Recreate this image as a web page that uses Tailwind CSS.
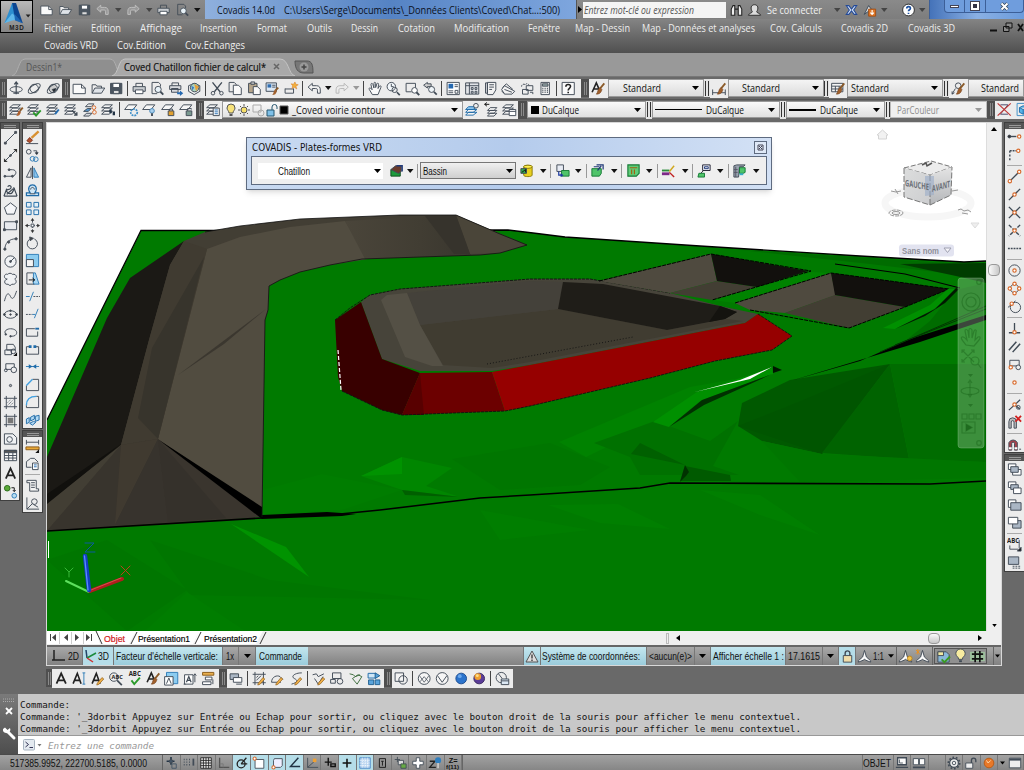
<!DOCTYPE html>
<html lang="fr">
<head>
<meta charset="utf-8">
<title>Covadis 14.0d</title>
<script src="https://cdn.jsdelivr.net/npm/@tailwindcss/browser@4"></script>
</head>
<body class="w-[1024px] h-[770px] overflow-hidden bg-[#696969] font-['Open_Sans','Noto_Sans',sans-serif] text-[10.5px] leading-none text-[#111] flex flex-col">

<!-- Title bar and menus -->
<header class="relative h-[53px] shrink-0 bg-linear-to-b from-[#858585] from-35% to-[#505050]">
  <div class="flex h-[19px] items-center bg-linear-to-b from-[#8a8a8a] to-[#7d7d7d] [&>*]:shrink-0">
    <div data-icons="new open saveg undog caretg redog caretg printw previeww" class="ml-[38px] flex h-full w-[153px] items-center justify-between"></div>
    <div data-icons="caret2" class="flex ml-[1px]"></div>
    <div class="ml-[3px] flex h-full w-[371px] items-center bg-linear-to-r from-[#8fb0dd] via-[#5583c4] to-[#7ea6de] text-[#0a1020]">
      <span data-w="58" class="ml-3">Covadis 14.0d</span>
      <span data-w="276" class="ml-[9px]">C:\Users\Serge\Documents\_Données Clients\Coved\Chat...:500)</span>
    </div>
    <div class="flex h-full w-[7px] items-center justify-center border-l border-[#555]"><svg class="h-[7px] w-[4px]" viewBox="0 0 4 7"><path d="M0 0l4 3.5L0 7z"/></svg></div>
    <div class="flex h-[16px] w-[143px] items-center bg-[#f4f4f4] text-[10px] italic text-[#555]"><span data-w="110" class="ml-[1px]">Entrez mot-clé ou expression</span></div>
    <div data-icons="bino user" class="flex ml-[2px] gap-[1px]"></div>
    <span data-w="55" class="ml-[4px] text-[#f2f2f2]">Se connecter</span>
    <div data-icons="caretg xchange a360 caretg" class="ml-[10px] flex items-center gap-[1px]"></div>
    <div data-icons="helpb caretg" class="ml-[11px] flex items-center"></div>
    <div class="ml-auto flex h-full w-[95px] items-start border-l border-[#3c5f98] bg-linear-to-r from-[#4573b9] via-[#8ab0e4] to-[#6b9bdc] pl-[14px]">
      <div class="flex h-[13px] w-[84px] rounded-b border border-t-0 border-[#3c5f98] bg-[#6f9ddd]">
        <div class="flex w-[20px] items-center justify-center border-r border-[#3c5f98]"><i class="block h-[3px] w-[9px] border border-[#445] bg-white"></i></div>
        <div class="flex w-[21px] items-center justify-center border-r border-[#3c5f98]"><i class="block size-[8px] border-2 border-white bg-[#334] outline outline-[#445]"></i></div>
        <div class="flex grow items-center justify-center"><svg class="size-[9px]" viewBox="0 0 9 9"><path d="M1.500 1.500l6 6M7.500 1.500l-6 6" stroke="#345" stroke-width="3.400"/><path d="M1.500 1.500l6 6M7.500 1.500l-6 6" stroke="#fff" stroke-width="2"/></svg></div>
      </div>
    </div>
  </div>
  <nav class="flex h-[17px] items-center pl-[44px] text-[#eeeeee] [&>*]:shrink-0">
    <span data-w="28">Fichier</span>
    <span data-w="30" class="ml-[19px]">Edition</span>
    <span data-w="42" class="ml-[19px]">Affichage</span>
    <span data-w="37" class="ml-[18px]">Insertion</span>
    <span data-w="30" class="ml-[20px]">Format</span>
    <span data-w="25" class="ml-[20px]">Outils</span>
    <span data-w="27" class="ml-[19px]">Dessin</span>
    <span data-w="37" class="ml-[20px]">Cotation</span>
    <span data-w="55" class="ml-[19px]">Modification</span>
    <span data-w="32" class="ml-[19px]">Fenêtre</span>
    <span data-w="55" class="ml-[15px]">Map - Dessin</span>
    <span data-w="113" class="ml-[12px]">Map - Données et analyses</span>
    <span data-w="52" class="ml-[15px]">Cov. Calculs</span>
    <span data-w="47" class="ml-[19px]">Covadis 2D</span>
    <span data-w="47" class="ml-[20px]">Covadis 3D</span>
    <svg class="ml-[33px] h-[11px] w-[36px]" viewBox="0 0 36 11" fill="none" stroke="#111"><path d="M2 8.500h7" stroke-width="2"/><path d="M18 1h6v5h-6zM15.500 4.500h5.500v5h-5.500z" fill="#888"/><path d="M30 2l5 7M35 2l-5 7" stroke-width="1.800"/></svg>
  </nav>
  <nav class="flex h-[17px] items-center pl-[44px] text-[#eeeeee]">
    <span data-w="54">Covadis VRD</span>
    <span data-w="49" class="ml-[19px]">Cov.Edition</span>
    <span data-w="60" class="ml-[19px]">Cov.Echanges</span>
  </nav>
  <div class="absolute left-0 top-0 flex h-[33px] w-[33px] flex-col items-center border border-black bg-linear-to-b from-[#b9b9b9] to-[#858585]">
    <svg class="h-[32px] w-[31px]" viewBox="0 0 31 32"><path d="M3 23L11 2h4l-2 14z" fill="#2d8fd0"/><path d="M11 2h4l7 21-8-4z" fill="#0c4590"/><path d="M3 23l8-10 4 3 3 3-7 1z" fill="#5fb8ea"/><path d="M13 13l9 10-8-3z" fill="#1c66b4"/><path d="M25 14h5l-2.500 3z" fill="#222"/><text x="8" y="30" font-size="6.500" font-weight="700" font-family="Liberation Sans" fill="#222" textLength="15">M3D</text></svg>
  </div>
</header>

<!-- Drawing tabs -->
<div class="flex h-[24px] shrink-0 items-end border-b border-[#777] bg-[#999999]">
  <svg class="h-[20px] w-[320px]" viewBox="0 0 320 20">
    <path d="M12 20c7-2 6-17 13-17h85c7 0 6 15 12 17z" fill="#8f8f8f" stroke="#aeaeae"/>
    <path d="M112 20c7-2 6-17 13-17h155c9 0 8 15 15 17z" fill="#a9a9a9" stroke="#c4c4c4"/>
    <path d="M295 5h12c5 0 6 4 6 12h-9c-6 0-9-4-9-12z" fill="#777" stroke="#555"/><circle cx="304" cy="11" r="4.500" fill="#999"/><path d="M301.500 11h5M304 8.500v5" stroke="#444" stroke-width="1.500"/>
    <path d="M274 8l5 5M279 8l-5 5" stroke="#666" stroke-width="1.500"/>
    <text x="26" y="14.500" font-size="11" fill="#555" textLength="36" lengthAdjust="spacingAndGlyphs">Dessin1*</text>
    <text x="124" y="14.500" font-size="11" fill="#111" stroke="#111" stroke-width=".2" textLength="142" lengthAdjust="spacingAndGlyphs">Coved Chatillon fichier de calcul*</text>
  </svg>
</div>

<!-- Toolbar row 1 -->
<div class="flex h-[22px] shrink-0 items-center text-[11px]">
  <div data-grip class="w-[7px] shrink-0"></div>
  <div data-icons="orbit orbit2 orbit3" class="flex h-[19px] shrink-0 items-center bg-[#ececec]"></div>
  <div data-grip class="w-[8px] shrink-0"></div>
  <div data-icons="new open save | print preview plot globe | cut copy paste match blockedit | undo caret redo caretg | hand zoomrt zoomwin zoomprev | props dcenter palette sheets markup calc | help" class="flex h-[19px] w-[511px] shrink-0 items-center bg-[#ececec]"></div>
  <div data-grip class="w-[8px] shrink-0"></div>
  <div data-icons="abrush" class="flex h-[19px] shrink-0 items-center bg-[#ececec]"></div>
  <div data-combo class="flex h-[18px] w-[96px] shrink-0 items-center border border-[#999] bg-linear-to-b from-[#f4f4f4] to-[#dcdcdc] pl-[14px] pr-1"><span data-w="38">Standard</span></div>
  <div data-bars class="w-[6px] shrink-0"></div>
  <div data-icons="dimbrush" class="flex h-[19px] shrink-0 items-center bg-[#ececec]"></div>
  <div data-combo class="flex h-[18px] w-[96px] shrink-0 items-center border border-[#999] bg-linear-to-b from-[#f4f4f4] to-[#dcdcdc] pl-[13px] pr-1"><span data-w="38">Standard</span></div>
  <div data-bars class="w-[5px] shrink-0"></div>
  <div data-icons="tablebrush" class="flex h-[19px] shrink-0 items-center bg-[#ececec]"></div>
  <div data-combo class="flex h-[18px] w-[96px] shrink-0 items-center border border-[#999] bg-linear-to-b from-[#f4f4f4] to-[#dcdcdc] pl-[3px] pr-1"><span data-w="38">Standard</span></div>
  <div data-bars class="w-[6px] shrink-0"></div>
  <div data-icons="leaderbrush" class="flex h-[19px] shrink-0 items-center bg-[#ececec]"></div>
  <div class="flex h-[18px] grow items-center border border-[#999] bg-linear-to-b from-[#f4f4f4] to-[#dcdcdc] pl-[12px]"><span data-w="38">Standard</span></div>
</div>

<!-- Toolbar row 2 -->
<div class="flex h-[20px] shrink-0 items-center border-t border-[#555] text-[11px]">
  <div data-grip class="w-[7px] shrink-0"></div>
  <div data-icons="laymatch layok laydown layup layiso laywalk | layfreeze layoff laylock layunlock" class="flex h-[18px] w-[189px] shrink-0 items-center bg-[#ececec]"></div>
  <div data-grip class="w-[8px] shrink-0"></div>
  <div data-icons="layprop" class="flex h-[18px] shrink-0 items-center bg-[#ececec]"></div>
  <div data-combo class="flex h-[17px] w-[241px] shrink-0 items-center border border-[#999] bg-linear-to-b from-[#fafafa] to-[#e2e2e2] pl-[1px] pr-1">
    <svg class="h-4 w-[67px] shrink-0" viewBox="0 0 67 16" fill="none" stroke="#555"><path d="M5 11c0-2-2-3-2-5a4 4 0 0 1 8 0c0 2-2 3-2 5z" fill="#f7e27a"/><path d="M5.500 13h3" stroke-width="2"/><circle cx="20" cy="8" r="3" fill="#f6df6a"/><path d="M20 2v2M20 12v2M14 8h2M24 8h2M16 4l1 1M23 11l1 1M24 4l-1 1M17 11l-1 1"/><path d="M29 3h8v7h-8z" stroke="#aaa"/><circle cx="37" cy="11" r="3" stroke="#aaa"/><path d="M43 8h7v6h-7z" fill="#7fc0e8" stroke="#27566f"/><path d="M48 8V5a2 2 0 0 1 5 0v2" stroke="#27566f"/><path d="M56 4h8v8h-8z" fill="#000"/></svg>
    <span data-w="93" class="ml-[1px]">_Coved voirie contour</span></div>
  <div data-icons="laycur layback laymgr" class="flex h-[18px] w-[55px] shrink-0 items-center bg-[#ececec]"></div>
  <div data-grip class="w-[9px] shrink-0"></div>
  <div data-combo class="flex h-[17px] w-[119px] shrink-0 items-center border border-[#999] bg-linear-to-b from-[#fafafa] to-[#e0e0e0] pl-[3px] pr-1"><i class="block size-[8px] bg-black"></i><span data-w="37" class="ml-[3px]">DuCalque</span></div>
  <div data-bars class="w-[6px] shrink-0"></div>
  <div data-combo class="flex h-[17px] w-[128px] shrink-0 items-center border border-[#999] bg-linear-to-b from-[#fafafa] to-[#e0e0e0] pl-[2px] pr-1"><i class="block h-px w-[47px] bg-black"></i><span data-w="38" class="ml-[4px]">DuCalque</span></div>
  <div data-bars class="w-[6px] shrink-0"></div>
  <div data-combo class="flex h-[17px] w-[99px] shrink-0 items-center border border-[#999] bg-linear-to-b from-[#fafafa] to-[#e0e0e0] pl-[2px] pr-1"><i class="block h-[2px] w-[27px] bg-black"></i><span data-w="38" class="ml-[4px]">DuCalque</span></div>
  <div data-bars class="w-[5px] shrink-0"></div>
  <div data-combo class="flex h-[17px] w-[97px] shrink-0 items-center border border-[#bbb] bg-[#f0f0f0] fill-[#999] pl-[6px] pr-1 text-[#8c8c8c]"><span data-w="42">ParCouleur</span></div>
  <div data-grip class="w-[8px] shrink-0"></div>
  <div data-icons="redx cube" class="flex h-[18px] grow items-center overflow-hidden bg-[#ececec]"></div>
</div>

<!-- Work area -->
<main class="flex h-[547px] shrink-0 pt-[3px]">
  <div class="flex h-[379px] w-[20px] shrink-0 flex-col border border-[#3f3f3f] bg-[#ececec]">
    <div class="flex h-[6px] flex-col items-center justify-center gap-px bg-[#555]"><i class="h-px w-[12px] bg-[#999]"></i><i class="h-px w-[12px] bg-[#999]"></i></div>
    <div data-icons="line xline pline mline3 polygon rect arc circle cloud spline ellipse earc insert block point hatch gradient region table textA addsel" class="flex grow flex-col items-center justify-between py-[1px]"></div>
  </div>
  <div class="ml-[2px] flex w-[21px] shrink-0 flex-col gap-[1px]">
    <div class="flex h-[307px] flex-col border border-[#3f3f3f] bg-[#ececec]">
      <div class="flex h-[6px] flex-col items-center justify-center gap-px bg-[#555]"><i class="h-px w-[12px] bg-[#999]"></i><i class="h-px w-[12px] bg-[#999]"></i></div>
      <div data-icons="erase copyobj mirror offset array move rotate scale stretch trim extend break1 break2 join chamfer fillet explode" class="flex grow flex-col items-center justify-between py-[1px]"></div>
    </div>
    <div class="flex h-[83px] flex-col border border-[#3f3f3f] bg-[#ececec]">
      <div class="flex h-[6px] flex-col items-center justify-center gap-px bg-[#555]"><i class="h-px w-[12px] bg-[#999]"></i><i class="h-px w-[12px] bg-[#999]"></i></div>
      <div data-icons="dist area - listp idpt" class="flex grow flex-col items-center justify-between py-[1px]"></div>
    </div>
  </div>

  <!-- Drawing window -->
  <section class="relative ml-[3px] flex h-[544px] w-[956px] shrink-0 flex-col border border-[#d8d8d8] bg-[#f0f0f0]">
    <div class="flex h-[508px]">
      <svg class="h-[508px] w-[939px] shrink-0 bg-white" viewBox="47 123 939 508">
        <defs>
          <linearGradient id="face" x1="0" y1="0" x2="1" y2="0"><stop offset="0" stop-color="#4a453a"/><stop offset=".6" stop-color="#413d33"/><stop offset="1" stop-color="#39362e"/></linearGradient>
          <linearGradient id="cl" x1="0" y1="0" x2="1" y2="1"><stop offset="0" stop-color="#dcdddd"/><stop offset="1" stop-color="#cccdcf"/></linearGradient>
          <linearGradient id="cr" x1="0" y1="0" x2="0" y2="1"><stop offset="0" stop-color="#e4e4e4"/><stop offset="1" stop-color="#b4b6b9"/></linearGradient>
        </defs>
        <!-- ground -->
        <path d="M47 420L141 231 508 230 533 233 565 237 700 246 860 256 964 262 986 261V631H47z" fill="#007a00"/>
        <path d="M47 420L141 230.500 508 230 533 233 565 237 700 246 860 256 964 262 986 261" fill="none" stroke="#000" stroke-width="1.300"/>
        <!-- ground facets -->
        <path d="M740 250l130 14 116 14v-15l-22 1-110-7z" fill="#006c00"/>
        <path d="M900 264l86-1v20l-30-7z" fill="#003c00"/>
        <path d="M955 290l31-7v33l-86 29 30-24z" fill="#006c00"/>
        <path d="M559 442l131-55 45-8-60 44-60 20-29 14z" fill="#008200"/>
        <path d="M594 443l61-22 55 20 28-20-25 45 26 9H640l-10-18z" fill="#007100"/>
        <path d="M631 454l9-11 45 22z" fill="#006000"/>
        <path d="M685 466l45 9 1 6h-51z" fill="#005a00"/>
        <path d="M680 482l5-17 4 7-3 4z" fill="#003200"/>
        <path d="M742 403l48-23 100-16-68 90-60-13-24-15z" fill="#005900"/>
        <path d="M786 407l104-43-68 90-84-28z" fill="#005200" opacity=".55"/>
        <path d="M890 364l19 95-87-6z" fill="#006300"/>
        <path d="M890 364h96v98l-77-3z" fill="#006c00"/>
        <path d="M762 441l60 13 164 8v16l-186 4z" fill="#007600"/>
        <path d="M452 459l98-16 60 24-30 18-80 5z" fill="#007600"/>
        <path d="M361 476l41-19 50 11-26 18 34 11-58-7z" fill="#008600"/><path d="M361 476l41-19v17z" fill="#009300"/>
        <path d="M402 490l58 7-55-2z" fill="#005f00"/>
        <path d="M262 490l60-16 80 16-60 20-80 5z" fill="#007d00"/>
        <path d="M530 497l80-8 60-6 316-2v150H47V531l215-16 140-9z" fill="#007a00"/>
        <path d="M548 505l70-1 52 25-70-6zM700 490l60 5 60 40-60-20z" fill="#007f00"/>
        <path d="M231 524l55 23 23 30z" fill="#009300"/>
        <path d="M150 540l120 40 160 20-240-5zM47 560l60-20 80 50-60 41z" fill="#007600"/>
        <path d="M187 592l-42 39h100z" fill="#007d00"/><path d="M480 510l20 30 90-10z" fill="#007e00"/>
        <!-- embankment -->
        <path d="M184 241l21-9 35-6 60-7 100-4h56l44 19 27 11-27 8-20 2-118 4-32 6-30 7-20 8-11 6-1 24-3 10-3 197L47 531V458z" fill="#423e34"/>
        <path d="M184 241l-54 37-23 40L47 457v46l74-58 28-105 21-75z" fill="#1b1915"/>
        <path d="M47 494l74-50-74 60z" fill="#11100d"/>
        <path d="M207 249l33-12 50-10 55-6 23 38-38 6-30 7-20 8-11 6-1 24-3 10-3 190-104-71z" fill="#514c40"/>
        <path d="M345 221l111-6 15 40-106 4z" fill="url(#face)"/>
        <path d="M456 215l45 19 26 11-27 8-30 1z" fill="#4a4539"/>
        <path d="M456 215l14 39h-16l-29-38z" fill="#36332c"/>
        <path d="M184 241l23 8-49 190-37 6 28-105 21-75z" fill="#403b31"/>
        <path d="M204 257l-46 182-20-21 14-70z" fill="#37342c"/>
        <path d="M178 375l88-66-42 35z" fill="#3b372f"/>
        <path d="M158 439l-37 6-74 86 215-14z" fill="#3a352e"/>
        <path d="M121 445l-5 80-69 6z" fill="#38342d"/><path d="M121 445l37-6-43 86z" fill="#403a30"/><path d="M158 439l10 83-53 3z" fill="#37332d"/><path d="M158 439l68 79-58 4z" fill="#35312b"/>
        <path d="M159 440l103 67v12z" fill="#000"/>
        <path d="M262 515l65-3 29 2-14 2-80 3z" fill="#000"/>
        <path d="M47 531l215-13M340 514l40-4 100-12 50-3 110-7 30-5 260 1 56-3" fill="none" stroke="#000" stroke-width="1.600"/>
        <path d="M262 517l3-197 3-10 1-24 11-6 20-8 30-7 32-6 118-4 20-2 27-8-27-11-44-19h-56l-100 4-60 7-35 6" fill="none" stroke="#111" stroke-width=".8"/>
        <!-- main basin -->
        <path d="M361 302l9-7 30-6 130-10h60l80 14 50 13 38 8-13 9-215 42-38 6h-72l-38-12z" fill="#47443a"/>
        <path d="M335 320l26-18 21 57 38 14-18 42-20-5-40-19-4-14z" fill="#380000"/>
        <path d="M420 373l72-1 13 39-103 4z" fill="#6c0000"/><path d="M420 373l4 42-22 0z" fill="#580000"/>
        <path d="M492 372l38-7 215-42 13-9 34 22-20 14-57 11-65 17-60 14-60 14-25 5z" fill="#960000"/>
        <path d="M420 325l138-16 109 21 60-11 16 2-213 41-38 6-49-3z" fill="#403c31"/>
        <path d="M407 293l123-12 33 1-5 27-138 16z" fill="#44413a"/>
        <path d="M381 300l6-5 20-2 13 32 23 41h-11l-27-9z" fill="#545045"/>
        <path d="M563 282l40 2 117 22 17 6-12 7-58 11-109-21z" fill="#1f1d18"/><path d="M720 306l17 6-12 7-16 3z" fill="#14130f"/>
        <path d="M487 364l146-27" stroke="#111" stroke-width=".9" stroke-dasharray="1 2"/>
        <path d="M335 320l15-12 20-13 30-6 130-10h60l80 14M342 391l40 19 20 5 103-4 25-5 120-28 65-17 57-11 20-14-34-22" fill="none" stroke="#111" stroke-width=".9" stroke-dasharray="3 1"/>
        <path d="M338 350l3 40" stroke="#fff" stroke-width="1.200" stroke-dasharray="4 2"/>
        <!-- side basins -->
        <path d="M599 281l112-27 6 27-47 12z" fill="#4f4a3f"/><path d="M717 281l40 6-45 13-42-7z" fill="#423e33"/><path d="M711 254l97 17-51 16-40-6z" fill="#12100d"/>
        <path d="M712 300l100-28 19 1-96 30z" fill="#008300"/>
        <path d="M735 303l96-30 5 22-51 18-35-3z" fill="#4f4a3f"/><path d="M835 295l70 12-56 21-64-15z" fill="#423e33"/><path d="M831 273l118 16-44 18-70-12z" fill="#12100d"/>
        <path d="M599 281l112-27 100 17-99 29M735 303l96-30 118 16M750 310l99 18 56-21 44-18" fill="none" stroke="#000" stroke-width="1" stroke-dasharray="4 1"/>
        <path d="M835 264l70 10 55 14" fill="none" stroke="#000" stroke-width="1.200"/>
        <path d="M948 289h8l-11 12-20 14-30 14-12-1 47-23z" fill="#009000"/><path d="M956 288l3 1-14 14-20 13-30 13 40-20z" fill="#001a00"/>
        <path d="M790 381l70-20 50-22 76-24v5l-66 22-60 18z" fill="#000"/><path d="M895 345l91-36M880 352l106-46" stroke="#003800" stroke-width="1"/>
        <!-- ditch -->
        <path d="M772 368l1 6-73 27-31 26-16-5 44-30z" fill="#009000"/><path d="M669 427l33-27 70-26-68 31z" fill="#003000"/>
        <path d="M695 392l45-12 32-13-22 12z" fill="#fff"/><path d="M773 366l9 4-9 3z" fill="#001500"/>
        <!-- UCS axes -->
        <g fill="none" stroke-linecap="round"><path d="M66 581l23 11" stroke="#5de05d" stroke-width="2"/><path d="M90 591l32-12" stroke="#b01d1d" stroke-width="4"/><path d="M91 590l30-12" stroke="#d65050"/><path d="M85 556l4 34" stroke="#123fc4" stroke-width="4.500"/><path d="M84.500 556l3.500 34" stroke="#5c8bff" stroke-width="1.300"/><path d="M121 566l9 9M130 566l-9 9" stroke="#b8441a"/><path d="M65 568l4 4 4-4M69 572v5" stroke="#38b838"/><path d="M85 543h9l-9 9h10" stroke="#0a5aa0"/></g>
        <!-- view cube -->
        <ellipse cx="928" cy="203" rx="43" ry="14" fill="none" stroke="#f6f6f6" stroke-width="7"/>
        <path d="M904 168l27-7 21 6-22 8z" fill="#ececec" stroke="#777" stroke-dasharray="5 2"/><path d="M904 168l26 7v30l-26-8z" fill="url(#cl)"/><path d="M930 175l22-8-1 28-21 10z" fill="url(#cr)"/>
        <path d="M904 168v29l26 8 21-10 1-28M930 175v30" fill="none" stroke="#777" stroke-dasharray="6 2"/><path d="M925 176l9 0v19l-9 1z" fill="#9aabc8" opacity=".6"/>
        <path d="M922 165l4-2 1 3 5-3" stroke="#555" stroke-width="1.500" fill="none"/>
        <text transform="translate(905 186) skewY(10)" font-size="9" font-weight="700" fill="#6a6f76" textLength="24" lengthAdjust="spacingAndGlyphs">GAUCHE</text>
        <text transform="translate(932 192) skewY(-16)" font-size="9" font-weight="700" fill="#6a6f76" textLength="18" lengthAdjust="spacingAndGlyphs">AVANT</text>
        <g fill="none" stroke="#999"><ellipse cx="896" cy="213" rx="7" ry="3" stroke-dasharray="4 1"/><ellipse cx="896" cy="213" rx="4" ry="1.500"/><path d="M891 191l5 1 5-1M895 189l3 5M952 191l6-1M958 210l3-1 3 2 4-1 3 2M962 213l6 1"/></g>
        <path d="M877 135l5.500-5 5.500 5h-1.500v4h-8v-4z" fill="#f2f2f2" stroke="#d4d4d4"/><path d="M971 223h8l-4 5z" fill="#eee" stroke="#ddd"/>
        <rect x="899" y="244.500" width="55" height="12" rx="3" fill="#e2e3f0"/><text x="902" y="254" font-size="8.500" font-weight="700" font-family="Liberation Sans" fill="#8f9099" textLength="37" lengthAdjust="spacingAndGlyphs">Sans nom</text><path d="M944 248h7l-3.500 4.500z" fill="#f5f5fa" stroke="#9fa0b0"/>
        <!-- navigation bar -->
        <rect x="958" y="278" width="26" height="170" rx="3" fill="#b5d8b5" fill-opacity=".33" stroke="#9c9" stroke-opacity=".35"/>
        <g fill="none" stroke="#1f6b1f" stroke-opacity=".55" stroke-width="1.200"><circle cx="971" cy="302" r="9"/><circle cx="971" cy="302" r="5"/><circle cx="979" cy="282" r="2.300"/><path d="M966 345c-3-4-6-7-4-8s4 2 5 3l-2-9c0-2 2-2 3 0l1 7v-8c0-2 2-2 3 0v8l2-7c1-2 3-1 2 1l-1 8 3-3c2-1 3 1 1 3l-5 6zM962 350l12 12M974 350l-12 12M962 353v-3h3M971 350h3v3M962 359v3h3"/><circle cx="975" cy="361" r="4"/><path d="M978 364l3 4M970 380v16M968 383l2-3 2 3M968 394l2 3 2-3"/><ellipse cx="970" cy="391" rx="9" ry="3.500"/><path d="M962 414h5v5h-5zM969 414h5v5h-5zM976 414h5v5h-5zM962 422h13v11h-13z"/><path d="M966 424l6 3.500-6 3.500z" fill="#1f6b1f"/><circle cx="979" cy="443" r="2.300"/></g>
        <path d="M968 374h5l-2.500 3zM968 404h5l-2.500 3z" fill="#1f6b1f" fill-opacity=".7"/>
        <path d="M48 541h1v17h-1z" fill="#fff"/>
      </svg>
      <div class="flex grow flex-col items-center justify-between border-l border-[#ddd] bg-[#efefef] py-[4px]">
        <svg class="h-[4px] w-[6px]" viewBox="0 0 6 4"><path d="M0 4l3-4 3 4z"/></svg>
        <div class="mb-[216px] h-[12px] w-[12px] rounded-sm border border-[#999] bg-linear-to-r from-[#fafafa] to-[#c8c8c8]"></div>
        <svg class="h-[3px] w-[5px]" viewBox="0 0 6 4"><path d="M0 0l3 4 3-4z"/></svg>
      </div>
    </div>
    <div class="flex h-[14px] items-center bg-[#efefef] font-['Liberation_Sans',sans-serif] text-[9.5px]">
      <svg class="h-[14px] w-[220px]" viewBox="0 0 220 14"><path d="M0 0h49l4 13H0z" fill="#fff"/><path d="M49 0l5 13h28l7-13z" fill="#fff"/><path d="M89 0l-5 13h62l6-13zM152 0l-5 13h62l7-13z" fill="#fff"/><path d="M49 0l6 13M90 1l-6 12M154 1l-6 12M219 1l-6 12" stroke="#333" fill="none"/><path d="M12.500 1v12M24.500 1v12M36.500 1v12" stroke="#ccc"/><path d="M9 3v7L5 6.500zM21 3v7l-4-3.500zM28 3v7l4-3.500zM39 3v7l4-3.500z" fill="#444"/><path d="M3.500 3v7M44.500 3v7" stroke="#444"/>
      <text x="57" y="10.500" fill="#cf1b1b" stroke="#cf1b1b" stroke-width=".2" textLength="21" lengthAdjust="spacingAndGlyphs">Objet</text><text x="91" y="10.500" stroke="#111" stroke-width=".2" textLength="52" lengthAdjust="spacingAndGlyphs">Présentation1</text><text x="157" y="10.500" stroke="#111" stroke-width=".2" textLength="53" lengthAdjust="spacingAndGlyphs">Présentation2</text></svg>
      <div class="ml-[399px] h-[11px] w-[3px] border border-[#bbb]"></div>
      <svg class="ml-[7px] h-[6px] w-[4px]" viewBox="0 0 4 6"><path d="M4 0L0 3l4 3z"/></svg>
      <div class="ml-[248px] h-[11px] w-[12px] rounded-sm border border-[#999] bg-linear-to-b from-[#fafafa] to-[#c8c8c8]"></div>
      <svg class="ml-[38px] h-[6px] w-[4px]" viewBox="0 0 4 6"><path d="M0 0l4 3-4 3z"/></svg>
    </div>
    <div class="flex h-[20px] items-stretch border-t-2 border-[#666] bg-linear-to-b from-[#a8a8a8] to-[#828282] pl-[4px] font-['Liberation_Sans',sans-serif] text-[10.5px] [&>*]:flex [&>*]:shrink-0 [&>*]:items-center">
      <div class="w-[32px] border-r border-[#777] pl-[1px]"><svg class="size-[14px]" viewBox="0 0 14 14"><path d="M2 1v10h11M0 11h2" fill="none" stroke="#222" stroke-width="1.500"/></svg><span data-w="11" class="ml-[2px]">2D</span></div>
      <div class="w-[31px] border-r border-[#777] bg-[#b5dde8] pl-[1px]"><svg class="size-[14px]" viewBox="0 0 14 14" fill="none" stroke-width="1.500"><path d="M2 1l1 8" stroke="#246"/><path d="M3 9l9-5" stroke="#1a8a3a"/><path d="M3 9l6 4" stroke="#c33"/></svg><span data-w="11">3D</span></div>
      <div class="w-[109px] border-r border-[#777] bg-linear-to-b from-[#c4e7ef] to-[#9accdb] pl-[2px]"><span data-w="102">Facteur d'échelle verticale:</span></div>
      <div class="w-[16px] border-r border-[#777] pl-[3px]"><span data-w="8">1x</span></div>
      <div class="w-[17px] justify-center border-r border-[#777]"><svg class="h-[4px] w-[7px]" viewBox="0 0 7 4"><path d="M0 0h7L3.500 4z"/></svg></div>
      <div class="w-[52px] bg-linear-to-b from-[#c4e7ef] to-[#9accdb] pl-[3px]"><span data-w="43">Commande</span></div>
      <div class="ml-[215px] w-[18px] justify-center border-x border-[#777] bg-linear-to-b from-[#c4e7ef] to-[#9accdb]"><svg class="h-[13px] w-[14px]" viewBox="0 0 14 13"><path d="M7 1l6 11H1z" fill="#ddd" stroke="#555"/><path d="M7 4.500v4M7 9.500v1.500" stroke="#333" stroke-width="1.300"/></svg></div>
      <div class="w-[106px] border-r border-[#777] bg-linear-to-b from-[#c4e7ef] to-[#9accdb] pl-[1px]"><span data-w="98">Système de coordonnées:</span></div>
      <div class="w-[48px] border-r border-[#777] pl-[2px]"><span data-w="43">&lt;aucun(e)&gt;</span></div>
      <div class="w-[16px] justify-center border-r border-[#777]"><svg class="h-[4px] w-[7px]" viewBox="0 0 7 4"><path d="M0 0h7L3.500 4z"/></svg></div>
      <div class="w-[75px] border-r border-[#777] bg-linear-to-b from-[#c4e7ef] to-[#9accdb] pl-[2px]"><span data-w="71">Afficher échelle 1 :</span></div>
      <div class="w-[37px] border-r border-[#777] pl-[2px]"><span data-w="32">17.1615</span></div>
      <div class="w-[16px] justify-center border-r border-[#777]"><svg class="h-[4px] w-[7px]" viewBox="0 0 7 4"><path d="M0 0h7L3.500 4z"/></svg></div>
      <div data-icons="lock" class="w-[17px] justify-center border-r border-[#777] bg-[#b5dde8]"></div>
      <div data-icons="anno" class="w-[17px] justify-center"></div>
      <div class="w-[24px] gap-[4px] border-r border-[#666]"><span data-w="11">1:1</span><svg class="h-[4px] w-[6px]" viewBox="0 0 7 4"><path d="M0 0h7L3.500 4z"/></svg></div>
      <div data-icons="anno2 anno3" class="w-[36px] border-r border-[#666]"></div>
      <div data-icons="sheetok bulb gridg" class="mx-[1px] my-[1px] w-[53px] justify-between border border-[#555] bg-[#909090]"></div>
      <div class="ml-[5px] w-[8px] justify-center border-l border-[#666]"><svg class="h-[4px] w-[5px]" viewBox="0 0 7 4"><path d="M0 0h7L3.500 4z"/></svg></div>
    </div>

    <!-- Floating palette -->
    <div class="absolute left-[199px] top-[14px] flex h-[53px] w-[526px] flex-col border border-[#5e6b80] bg-linear-to-r from-[#c9daf1] via-[#b4cbec] to-[#d3e1f5] px-[4px] pb-[4px] shadow-md">
      <div class="flex h-[18px] items-center justify-between font-['DejaVu_Sans_Condensed','DejaVu_Sans',sans-serif] text-[10px]"><span data-w="130" class="ml-[1px]">COVADIS - Plates-formes VRD</span><div class="flex size-[13px] items-center justify-center border border-[#5e6b80] bg-[#dfe9f7]"><svg class="size-[7px]" viewBox="0 0 7 7"><path d="M1 1h5v5H1zM2 2l3 3M5 2L2 5" fill="none" stroke="#445"/></svg></div></div>
      <div class="flex grow items-center border border-[#5e6b80] bg-[#efefef] pl-[6px] font-['Liberation_Sans',sans-serif] text-[10px] [&>*]:shrink-0">
        <div data-combo class="flex h-[16px] w-[125px] items-center bg-white pl-[20px] pr-[2px]"><span data-w="32">Chatillon</span></div>
        <div data-icons="pf1 caret" class="ml-[5px] flex items-center"></div>
        <div class="ml-[2px] h-[14px] w-px bg-[#999]"></div>
        <div data-combo class="ml-[2px] flex h-[17px] w-[96px] items-center border border-[#777] bg-linear-to-b from-[#f0f0f0] to-[#cfcfcf] pl-[2px] pr-[2px]"><span data-w="24">Bassin</span></div>
        <div data-icons="pf2 caret ; pf3 caret ; pf4 caret ; pf5 caret ; pf6 caret ; pf7 caret ; pf8 caret" class="ml-[2px] flex w-[243px] items-center justify-between"></div>
      </div>
    </div>
  </section>

  <div class="ml-[2px] flex grow flex-col gap-[1px] overflow-hidden">
    <div class="flex h-[331px] w-[22px] flex-col border border-[#3f3f3f] bg-[#ececec]">
      <div class="flex h-[6px] shrink-0 flex-col items-center justify-center gap-px bg-[#555]"><i class="h-px w-[12px] bg-[#999]"></i><i class="h-px w-[12px] bg-[#999]"></i></div>
      <div data-icons="track from - send smid sint sapp sext - scen squa stan - sper spar sins snod - snea snone - ssett" class="flex grow flex-col items-center justify-between pr-[2px]"></div>
    </div>
    <div class="flex h-[118px] w-[22px] flex-col border border-[#3f3f3f] bg-[#ececec]">
      <div class="flex h-[6px] shrink-0 flex-col items-center justify-center gap-px bg-[#555]"><i class="h-px w-[12px] bg-[#999]"></i><i class="h-px w-[12px] bg-[#999]"></i></div>
      <div data-icons="ord1 ord2 ord3 ord4 - abc ordh" class="flex grow flex-col items-center justify-between py-[1px] pr-[2px]"></div>
    </div>
  </div>
</main>

<!-- Bottom toolbar -->
<div class="flex h-[28px] shrink-0 pl-[46px] pt-[3px]">
  <div data-grip class="h-[19px] w-[6px]"></div>
  <div data-icons="textA textI textE find spell abrush tscale tjust tspace" class="flex h-[19px] w-[167px] items-center bg-[#ececec]"></div>
  <div data-grip class="h-[19px] w-[8px]"></div>
  <div data-icons="order | hatche plinee splinee | arre refe refs attsync" class="flex h-[19px] w-[157px] items-center bg-[#ececec]"></div>
  <div data-grip class="h-[19px] w-[8px]"></div>
  <div data-icons="vs2d | vswire vshide vsreal vsconc | vsmgr" class="flex h-[19px] w-[121px] items-center bg-[#ececec]"></div>
</div>

<!-- Command line -->
<div class="flex h-[60px] shrink-0">
  <div class="flex w-[18px] flex-col items-center bg-linear-to-b from-[#7a7a7a] to-[#4e4e4e] pt-[4px]">
    <svg class="h-[50px] w-[16px]" viewBox="0 0 16 50" fill="none"><path d="M2 1h12M2 3.500h12" stroke="#aaa" stroke-dasharray="1 1"/><path d="M5 10l6 6M11 10l-6 6" stroke="#fff" stroke-width="1.800"/><path d="M7 34l6 6" stroke="#fff" stroke-width="3" stroke-linecap="round"/><path d="M4 29.500l2.500 2.500L9 30a3.500 3.500 0 0 1-4 5 3.500 3.500 0 0 1-3-4z" fill="#fff"/></svg>
  </div>
  <div class="flex grow flex-col">
    <div class="flex h-[42px] flex-col border-b border-[#999] bg-[#c8c8c8] pl-[2px] pt-[4px] font-['DejaVu_Sans_Mono',monospace] text-[9.3px] text-[#141414]">
      <p class="flex h-[12px] items-center"><span data-w="50">Commande:</span></p>
      <p class="flex h-[12px] items-center"><span data-w="781">Commande: '_3dorbit Appuyez sur Entrée ou Echap pour sortir, ou cliquez avec le bouton droit de la souris pour afficher le menu contextuel.</span></p>
      <p class="flex h-[12px] items-center"><span data-w="781">Commande: '_3dorbit Appuyez sur Entrée ou Echap pour sortir, ou cliquez avec le bouton droit de la souris pour afficher le menu contextuel.</span></p>
    </div>
    <div class="flex grow items-center bg-white pl-[5px] font-['DejaVu_Sans_Mono',monospace] text-[9.3px] italic text-[#999]">
      <svg class="h-[12px] w-[20px]" viewBox="0 0 20 12"><rect x=".5" y=".5" width="11" height="10.500" rx="1" fill="#e4eaf0" stroke="#a8b4c0"/><path d="M2.500 3l3 2.500-3 2.500M6.500 8.500h3.500" fill="none" stroke="#335"/><path d="M14.500 5h4L16.500 7.500z" fill="#777"/></svg>
      <span data-w="106" class="ml-[5px]">Entrez une commande</span>
    </div>
  </div>
</div>

<!-- Status bar -->
<footer class="flex h-[16px] shrink-0 items-stretch border-t border-[#4a4a4a] bg-linear-to-b from-[#a2a2a2] to-[#868686] font-['Liberation_Sans',sans-serif] text-[10px] [&>*]:flex [&>*]:shrink-0 [&>*]:items-center">
  <div class="w-[162px] pl-[10px]"><span data-w="137">517385.9952, 222700.5185, 0.0000</span></div>
  <div data-status="infer snap grid ortho polar* osnap* osnap3d* otrack* ducs dyn lwt* tpy* qp sc plus3d zpin zfx" class="w-[301px] border-x border-[#666]"></div>
  <div class="ml-[399px] w-[32px] border-x border-[#777]"><span data-w="28">OBJET</span></div>
  <div data-status="lmodel lquick blank gear unlock orange" class="w-[104px]"></div>
  <div class="w-[9px] justify-center"><svg class="h-[4px] w-[5px]" viewBox="0 0 7 4"><path d="M0 0h7L3.500 4z"/></svg></div>
  <div data-status="clean" class="w-[17px]"></div>
</footer>

<script>
const pencil = '<path d="M7 13l5-6 2 1.500-5 5.500-2.500 1z" fill="#f0b048" stroke="#8a5a18" stroke-width=".7"/>';
const brush = '<path d="M14.500 2.500L10 8" stroke="#8a5a28" stroke-width="2"/><path d="M10 7l2 2c-1 4-3 5-6 5 2-2 1-5 4-7z" fill="#a0602c" stroke="#70401c" stroke-width=".6"/>';
const layers = '<path d="M4.500 10h8l-3.500 3H1z" fill="#f6f6f6"/><path d="M4.500 6.500h8L9 9.500H1z" fill="#f6f6f6"/><path d="M4.500 3h8L9 6H1z" fill="#f6f6f6"/>';
const layer1 = '<path d="M5 3h9l-4 5H1z" fill="#f6f6f6"/>';
const O = '#d8692a';
const ring = (x, y, r = 1.8) => `<circle cx="${x}" cy="${y}" r="${r}" stroke="${O}" fill="#fff" stroke-width="1.200"/>`;
const icons = {
  'new': '<path d="M1.500 3.500h9l4 4v6h-13z" fill="#fafafa"/><path d="M10.500 3.500v4h4"/>',
  open: '<path d="M1.500 13V4h4l1 1.500h5V8" fill="#eee"/><path d="M1.500 13l3-5.500H15L11.500 13z" fill="#dfe3e8"/>',
  save: '<path d="M2 2.500h12v11H2z" fill="#4b5560"/><path d="M4.500 2.500h7V7h-7z" fill="#fff"/><path d="M5 10h6v3.500H5z" fill="#ddd"/>',
  print: '<path d="M4.500 6V2.500h7V6"/><path d="M1.500 6h13v5h-13z" fill="#c8ccd0"/><path d="M4 9.500h8v4H4z" fill="#fff"/>',
  preview: '<path d="M2.500 1.500h7l2 2V6M8 13.500H2.500v-12" fill="none"/><circle cx="9" cy="9" r="3.300" fill="#e8f2f8"/><path d="M11.500 11.500l3 3" stroke-width="2"/>',
  plot: '<path d="M3.500 5V2h7v3"/><path d="M1 5h12v4H1zM3 8h7v4H3z" fill="#d8dade"/><path d="M9 12h3v-2l3.500 3-3.500 3v-2H9z" fill="#2468b0" stroke="none"/>',
  globe: '<path d="M2 5l6-2.500L14 5v6l-6 3.500L2 11z" fill="#eee"/><circle cx="8.500" cy="7" r="4.500" fill="#a8d4c0"/><path d="M8 3l5 3-3 5z" fill="#e8a038" stroke="none"/><path d="M5 5l3 2-2 3z" fill="#3a78c8" stroke="none"/>',
  cut: '<path d="M3 1.500l8 10M13 1.500L5 11.500" stroke-width="1.400"/><circle cx="3.500" cy="13" r="1.900"/><circle cx="12.500" cy="13" r="1.900"/>',
  copy: '<path d="M1.500 1.500H7l2 2v8H1.500z"/><path d="M6 4.500h5.500l3 3v7H6z" fill="#fafafa"/>',
  paste: '<path d="M2 2.500h9v10H2z" fill="#b5a58a"/><path d="M4.500 1h4v2.500h-4z" fill="#ccc"/><path d="M7 6h4.500l3 3v5.500H7z" fill="#fafafa"/>',
  match: '<path d="M1.500 2h11v9h-11z" fill="#dce8f4"/><path d="M3 3.500h4V7H3z" fill="#2f6db0" stroke="none"/><path d="M8 4.500h3.500M8 6.500h3.500"/><path d="M14.500 7l-3 3" stroke="#8a5a28" stroke-width="2"/><path d="M11 9l2 2c-1 3-2 4-5 4 2-2 1-4 3-6z" fill="#a0602c" stroke="none"/>',
  blockedit: '<path d="M1.500 8.500h9M1.500 8v5h9V8"/><path d="M12 1l1 2.500L15.500 4 13 5.500l1 3-3-2L9 8l.5-3L8 3l2.500.5z" fill="#f4b13c" stroke="#d8832a" stroke-width=".6"/>',
  undo: '<path d="M1.500 6.500L6 2.500V5h4.500c3 0 4 2 4 4.500V13h-3v-3c0-1.500-.5-2-2-2H6v2.500z" fill="#f2f2f2"/>',
  redo: '<path d="M14.500 6.500L10 2.500V5H5.500c-3 0-4 2-4 4.500V13h3v-3c0-1.500.5-2 2-2H10v2.500z" stroke="#b8b8b8"/>',
  hand: '<path d="M5 14.500L2 9.500c-1.500-2 .5-3 2-1l.7.8L3.500 4c-.3-1.700 1.500-2 2-.5L6.700 7.500V2.500c0-1.500 1.800-1.500 1.800 0v4.500L9.800 3c.6-1.300 2-.7 1.800.6L11 8l1.500-2.500c1-1 2.300 0 1.500 1.500l-3 7.500z" fill="#fafafa"/>',
  zoomrt: '<circle cx="6" cy="6" r="4.500" fill="#f4f8fb"/><path d="M6 3v3h2.500"/><circle cx="9.500" cy="9.500" r="2.800"/><path d="M12 12l3 3" stroke-width="1.800"/>',
  zoomwin: '<path d="M1.500 2.500h10v7"/><path d="M1.500 2.500v9h6"/><circle cx="10.500" cy="10" r="3" fill="#fff"/><path d="M12.500 12l3 3" stroke-width="2"/>',
  zoomprev: '<path d="M5 1.500L1 4.500l4 3V6h4V3H5z" fill="#ccc"/><circle cx="9.500" cy="9" r="3.200" fill="#eef4f8"/><path d="M12 11.500l3 3" stroke-width="1.800"/>',
  props: '<path d="M1.500 1.500h13v13h-13z" fill="#fff"/><path d="M3 3h5v5H3z" fill="#2468b0" stroke="none"/><path d="M9.500 4H13M9.500 6H13M3 10.500h5M3 12.500h5M10 10h3v3h-3z"/>',
  dcenter: '<path d="M1 2h14v12H1z" fill="#e2e4e8"/><path d="M5 2v12M1 5h14M7 7h2v2H7zM11 7h2v2h-2zM7 11h2v2H7zM11 11h2v2h-2z"/>',
  palette: '<path d="M5 1.500h9v8l-3 5H5z" fill="#f2f2f2"/><path d="M3 2h2v11H3zM7 4h5M7 6.500h5M7 9h3"/>',
  sheets: '<path d="M1 9l3-4 11 6-3 3H4z" fill="#f2f2f2"/><path d="M2 7l4-4 7 6M1 11l3 2M4 9l8 3"/>',
  markup: '<path d="M2 6c0-3 3-3 4-2 1-2 4-1 4 1" stroke-dasharray="2 1"/><path d="M7 5h7v5H7zM3 9h6v5H3z" fill="#eee"/><path d="M11 12h3v2"/>',
  calc: '<path d="M3.500 1.500h9v13h-9z" fill="#f4f4f4"/><path d="M5 3h6v2.500H5z" fill="#9aa"/><path d="M5 8h6M5 10h6M5 12h6" stroke-dasharray="1 1.400" stroke-width="1.500"/>',
  help: '<path d="M1.500 1.500h13v13h-13z" fill="#fafafa"/><path d="M5.500 6c0-3 5-3 5-.3C10.500 8 8 7.500 8 10M8 11.500v1.500" stroke-width="1.700" stroke="#222"/>',
  orbit: '<path d="M8 1v13M6 3.500L8 1l2 2.500M5 13h6" stroke-width="1.300"/><ellipse cx="8" cy="9" rx="6.500" ry="3"/>',
  orbit2: '<circle cx="8" cy="8" r="4.500" fill="#eee"/><ellipse cx="8" cy="8" rx="7.500" ry="3.500" transform="rotate(-35 8 8)"/>',
  orbit3: '<circle cx="8" cy="8" r="4.500" fill="#ccc"/><ellipse cx="8" cy="8" rx="7.500" ry="3.500" transform="rotate(-35 8 8)"/><path d="M7 9l4-1-2 4z" fill="#111"/>',
  abrush: '<path d="M1.500 12L6 2l4 9M3 8.500h5" stroke-width="1.700" stroke="#222"/>' + brush,
  dimbrush: '<path d="M1 9v6M14.500 9v6M1 12.500h13.500"/>' + brush,
  tablebrush: '<path d="M1 2.500h12v9H1zM1 5.500h12M5 5.500v6M9 5.500v6M1 8.500h12" fill="#f4f4f4"/>' + brush,
  leaderbrush: '<path d="M1.500 14L5 8M1.500 14v-3M1.500 14l2.500-1.500"/><circle cx="8" cy="5" r="3"/>' + brush,
  laymatch: layers + '<path d="M15 6l-3 3.500" stroke="#8a5a28" stroke-width="2"/><path d="M11 9l2 2c-1 3-2 4-5 4 2-2 1-4 3-6z" fill="#b0602c" stroke="none"/>', layok: layers + '<path d="M7 11l3 3.500L15 9" stroke="#2a9a2a" stroke-width="2"/>',
  laydown: layers + '<path d="M14 8l-4 5" stroke="#246cb0" stroke-width="2"/>', layup: layers + '<path d="M9 9l5 5M14 11v3h-3" stroke-width="1.500"/>',
  layiso: '<path d="M6 2h6l-3 3H3z"/><path d="M5 7h4l-3 3H1z" fill="#5a9ad0"/><path d="M4 12h6l-3 3H1z" fill="#d8dade"/><circle cx="12" cy="6" r="2" stroke="#d8692a"/><circle cx="12.500" cy="11" r="2" stroke="#d8692a"/>',
  laywalk: layers + '<path d="M10.500 8v4M14 10v4" stroke-width="2.500" stroke="#234"/>',
  layfreeze: layer1 + '<circle cx="11" cy="11" r="3.500" stroke="#3f8fc8" stroke-dasharray="2 1" stroke-width="1.800"/>',
  layoff: layer1 + '<circle cx="11" cy="9.500" r="2.500" fill="#a8d0ee" stroke="#4a88b8"/><path d="M11 12v3" stroke-width="2"/>',
  laylock: layer1 + '<path d="M8 9.500h6v5H8z" fill="#e0a030"/><path d="M9.500 9.500V7.500h3v2"/>',
  layunlock: layer1 + '<path d="M8 9.500h6v5H8z" fill="#7a9a90"/><path d="M9.500 9.500V7h4v1"/>',
  layprop: layers + '<path d="M8 6.500h6.500v8H8z" fill="#fff"/><path d="M9.500 8.500H13M9.500 10.500H13M9.500 12.500H13" stroke="#246cb0"/>',
  laycur: '<path d="M4 11h9l-4 3H1zM4 8h9l-4 3H1z" fill="#f4f4f4" stroke="#1f6ba8"/><path d="M4 5h9l-4 3H1z" fill="#8cc4ec" stroke="#1f6ba8"/><circle cx="12" cy="4" r="2.500" fill="#eee"/>',
  layback: '<path d="M7 12h7l-3 3H4zM7 9h7l-3 3H4zM7 6h7l-3 3H4z" fill="#f6f6f6"/><path d="M1 2.500h5M3.500.5L1 2.500l2.500 2" stroke="#111"/>',
  laymgr: layers + '<path d="M8 8h7v6.500H8zM8 10h7" fill="#fff"/>',
  redx: '<path d="M4 3h8L4 13h8" stroke="#446"/><path d="M1 1.500l14 13M15 1.500l-14 13" stroke="#c23a3a" stroke-width="1.300"/>',
  cube: '<path d="M1.500 1.500h13v13h-13z" stroke="#3f8fc8"/><path d="M4 6l4-2 4 2v5l-4 2-4-2zM4 6l4 2 4-2M8 8v5" fill="#58b4e8" stroke="#1f6ba8"/>',
  line: '<path d="M2.500 13.500l11-11"/><path d="M1.500 13h2v2h-2zM12.500 1.500h2v2h-2z" fill="#555"/>',
  xline: '<path d="M2 14L14 2"/><path d="M1 15v-4l4 4zM15 1v4l-4-4z" fill="#333" stroke="none"/><circle cx="8" cy="8" r="1" fill="#555"/>',
  pline: '<path d="M2 12h8c5-1 5-7 0-7H7"/><circle cx="2" cy="12" r="1" fill="#555"/><circle cx="10" cy="12" r="1" fill="#555"/><circle cx="6.500" cy="5" r="1" fill="#555"/>',
  mline3: '<path d="M1 14l3-8M15 14l-3-8M1 14h14M5 4c2-3 5 0 3 2s-5 0-4 3 5 3 6 1 3-5 1-5M4 12l7-6" stroke-width="1.300"/>',
  polygon: '<path d="M8 2l6.500 5-2.500 7H4L1.500 7z" fill="#f5f6f8"/>',
  rect: '<path d="M1.500 4h13v8.500h-13z" fill="#e8eaee"/><path d="M.5 11.500h2v2h-2zM13.500 3h2v2h-2z" fill="#555"/>',
  arc: '<path d="M2 14C2 8 6 3 14 3"/><circle cx="2" cy="14" r="1.200" fill="#555"/><circle cx="6" cy="6.500" r="1.200" fill="#555"/><circle cx="14" cy="3" r="1.200" fill="#555"/>',
  circle: '<circle cx="8" cy="8" r="6" fill="#f0f2f4"/><circle cx="8" cy="8" r="1" fill="#555"/><path d="M8 8l4-4"/>',
  cloud: '<path d="M4.500 7.500C0 7.500 1 1 5 2.500c1-1.500 4-1.500 5 0 4-1 6 3.500 2.500 5 3 2 1.500 6.500-3 5.500-1 2-3.500 1.500-4 0-4.500 1-5-4.500-1-5.500z" fill="#f0f2f4"/>',
  spline: '<path d="M1.500 13C4 3 6 4 8 8s4 2 6.500-6"/>',
  ellipse: '<ellipse cx="8" cy="8" rx="6.500" ry="4"/><circle cx="8" cy="8" r=".8" fill="#444"/><circle cx="8" cy="4" r=".8" fill="#444"/><circle cx="1.500" cy="8" r="1" fill="#444"/><circle cx="14.500" cy="8" r="1" fill="#444"/>',
  earc: '<path d="M3 10C0 6 5 4 8 4c5 0 8 3 6 6-1 2-4 2-6 2"/><circle cx="3" cy="10" r=".8" fill="#444"/><circle cx="8" cy="12" r=".8" fill="#444"/>',
  insert: '<path d="M4 2.500h7l2 3v3H4zM2 8.500h7v5H2z" fill="#eee"/><circle cx="11" cy="10" r="2.500"/><path d="M15 11v4h-4z" fill="#111" stroke="none"/>',
  block: '<path d="M3 4h9v6H3z" fill="#eee"/><circle cx="11.500" cy="10.500" r="3" fill="#eee"/><circle cx="3" cy="11" r="1.500"/>',
  point: '<circle cx="8" cy="8" r="1.200" fill="#aaa"/>',
  hatch: '<path d="M3.500 1v14M12.500 1v14M1 3.500h14M1 12.500h14"/><path d="M5 11l6-6M5 8l3-3M8 11l3-3" stroke-dasharray="1 1"/>',
  gradient: '<path d="M3.500 1v14M12.500 1v14M1 3.500h14M1 12.500h14"/><path d="M5 5h6v6H5z" fill="#777" stroke="none"/>',
  region: '<path d="M1.500 3h9l4 4v7h-13z" fill="#f0f2f4"/><circle cx="7" cy="9" r="3"/>',
  table: '<path d="M1.500 2.500h13v11h-13zM1.500 8h13M1.500 10.700h13M6 5v8.500M10.500 5v8.500" fill="#fafafa"/><path d="M1.500 2.500h13V5h-13z" fill="#555"/>',
  textA: '<path d="M3 13.500L8 2.500l5 11M4.800 10h6.400" stroke-width="1.900" stroke="#222"/>',
  addsel: '<circle cx="4.500" cy="4.500" r="3" fill="#5aa838" stroke="#2c6c1c"/><path d="M9 4h3v4M10.500 6.500L12 8l1.500-1.500" stroke="#111"/><circle cx="12" cy="12.500" r="2.500" fill="#b8dcf0" stroke="#2f7db8"/>',
  erase: '<path d="M14.500 1.500L7 8.500" stroke="#d89030" stroke-width="2.500"/><path d="M5 8l3 3-3 2.500-3-2z" fill="#b5502c" stroke="#7c3018"/><path d="M1 14.500h13"/>',
  copyobj: '<circle cx="4" cy="4" r="2.500"/><path d="M9 3h3.500v3"/><path d="M11 5l1.500 2L14 5z" fill="#222"/><circle cx="8" cy="11.500" r="2.500" stroke="#2f7db8"/><circle cx="11.500" cy="12" r="2.500" stroke="#2f7db8"/>',
  mirror: '<path d="M6.500 3v10H1.500zM8 1v14"/><path d="M9.500 3v10h5z" fill="#8cc4ec" stroke="#2f7db8"/>',
  offset: '<path d="M1.500 13.500v-3h4C2 5 5 2 8 2s6 3 2.500 8.500h4v3z" fill="#cfe6f6" stroke="#1f6ba8" stroke-width="1.300"/><path d="M5 11.500h6M6 7c0-3 4-3 4 0"/>',
  array: '<path d="M1.500 1.500h5v5h-5zM9.500 1.500h5v5h-5zM1.500 9.500h5v5h-5zM9.500 9.500h5v5h-5z" fill="#e4f0f8" stroke="#1f6ba8"/>',
  move: '<path d="M8 1v14M1 8h14" stroke-dasharray="4 1.500"/><path d="M8 0L6 3h4zM8 16l-2-3h4zM0 8l3-2v4zM16 8l-3-2v4z" fill="#333" stroke="none"/><path d="M6.500 6.500h3v3h-3z" fill="#fff"/>',
  rotate: '<path d="M5 3.500a5.500 5.500 0 1 0 5-.3"/><path d="M5 1l4 1.500L5.500 5z" fill="#444"/>',
  scale: '<path d="M1.500 1.500h13v13h-13z" fill="#8cccf0" stroke="#2f7db8"/><path d="M1.500 7h7.500v7.500H1.500z" fill="#f4f4f4"/>',
  stretch: '<path d="M2 14V2h7"/><path d="M9 2h2l4 12H9z" fill="#a8d8f4" stroke="#2f7db8"/><path d="M4 9.500h6M8 7.500l2.500 2-2.500 2" stroke="#111"/><path d="M2 14h8"/>',
  trim: '<path d="M1 8h4M5 13L9 3" stroke="#2f7db8"/><path d="M9 8h7" stroke-dasharray="2 1"/>',
  extend: '<path d="M1 9h7" stroke-dasharray="2 1"/><path d="M8 9h3M10 13l4-10" stroke="#2f7db8"/>',
  break1: '<path d="M1.500 13V5h9M1.500 13h12V8"/><path d="M11 4h4v2h-4z" fill="#1f6ba8" stroke="none"/>',
  break2: '<path d="M5 5H1.500v8h13V5H11"/><path d="M4 3.500h3v3H4zM9 3.500h3v3H9z" fill="#1f6ba8" stroke="none"/>',
  join: '<path d="M1 8h14" stroke="#2f7db8"/><path d="M4 5.500L8 8l-4 2.500zM12 5.500L8 8l4 2.500z" fill="#1f6ba8" stroke="none"/>',
  chamfer: '<path d="M1.500 14.500V9M1.500 14.500h13v-12H8"/><path d="M1.500 9L8 2.500" stroke="#3f9fe0" stroke-width="1.500"/>',
  fillet: '<path d="M1.500 14.500V12M1.500 14.500h13v-12H12"/><path d="M1.500 12C1.500 5 6 2.500 12 2.500" stroke="#3f9fe0" stroke-width="1.500"/>',
  explode: '<path d="M1.500 7.500l3-1.500v5l-3 1.500zM6 5.500l4-2v4l-4 2zM11 4.500l4-1v5l-4 1.500zM5 12l4-2 2.500 1-3.500 3z" fill="#b4daf4" stroke="#1f6ba8"/>',
  dist: '<path d="M1.500 2v5M14.500 2v5M1.500 4.500h13"/><path d="M1 9.500h14v3H1z" fill="#e8a838" stroke="#8a5a18"/><path d="M15 12v4h-4z" fill="#111" stroke="none"/>',
  area: '<path d="M1.500 12V6L6 2.500h4l4 4M1.500 12H7"/><path d="M8 7.500h6v7H8z" fill="#fff"/><path d="M9.500 9.500h3M9.500 11.500h3" stroke="#246cb0"/>',
  listp: '<path d="M2 2.500h10v9h2.500v2.500H5V5H2z" fill="#f4f4f4"/><path d="M6.500 5h4M6.500 7.500h4M6.500 10h4"/>',
  idpt: '<path d="M2 1.500V14h13M2 14l6-6"/><circle cx="10" cy="6" r="3"/><path d="M9 9l5 3"/>',
  track: '<path d="M1 8h9" stroke-width="1.500"/><circle cx="2.500" cy="8" r="1.500" fill="#333"/>' + ring(13, 8),
  from: '<path d="M3 4h7" stroke-dasharray="2 1" stroke-width="1.500"/><path d="M3 4v11" stroke-dasharray="2 2" stroke-width="1.500"/>' + ring(12, 4),
  send: '<path d="M2 14L13 3" stroke-width="1.500"/>' + ring(3, 13) + ring(13, 3),
  smid: '<path d="M2 14L14 2" stroke-width="1.500"/>' + ring(8, 8),
  sint: '<path d="M2 2l12 12M14 2L2 14" stroke-width="1.500"/>' + ring(8, 8),
  sapp: '<path d="M2 2l12 12M14 2L2 14" stroke-width="1.500" stroke-dasharray="4 1.500"/>' + ring(8, 8),
  sext: '<path d="M1 8h14" stroke-width="1.500" stroke-dasharray="2 1"/>',
  scen: '<circle cx="8" cy="8" r="6"/>' + ring(8, 8), squa: '<circle cx="8" cy="8" r="4.500"/>' + ring(8, 3) + ring(8, 13) + ring(3, 8) + ring(13, 8),
  stan: '<circle cx="9" cy="9" r="5.500"/><path d="M1 9l8-7"/>' + ring(5, 5), sper: '<path d="M8 2v10M2 12.500h12" stroke-width="1.400"/>' + ring(8, 12),
  spar: '<path d="M2 12l8-9M6 14l8-9" stroke-width="1.600"/>', sins: '<path d="M3 3.500h10v6H3z"/><circle cx="12" cy="11" r="2.500" fill="#eee"/>' + ring(4, 11),
  snod: ring(8, 8), snea: '<path d="M2 14L14 3M9 9l5 4" stroke-width="1.300"/><circle cx="12" cy="11" r="2"/>' + ring(8, 8),
  snone: '<path d="M2 14V7a4 4 0 0 1 8 0v7H7.500V7.500a1.500 1.500 0 0 0-3 0V14z" fill="#bbb"/><path d="M9 1l6 6M15 1L9 7" stroke="#d02020" stroke-width="2"/>',
  ssett: '<path d="M2 14V6a5 5 0 0 1 9 0v8H8V7a1.500 1.500 0 0 0-3 0v7z" fill="#a8404a"/><path d="M2 12h3M8 12h3" stroke="#fff" stroke-width="2"/><path d="M13 13h2"/>',
  ord1: '<path d="M1.500 2h8v6h-8zM6 8h9v6H6z" fill="#fff"/><path d="M4 5h8v6H4z" fill="#aab6c4"/>', ord2: '<path d="M1.500 2h8v6h-8z" fill="#fff"/><path d="M4 5h8v5H4z" fill="#aab6c4"/><path d="M7 8.500h8v6H7z" fill="#fff"/>',
  ord3: '<path d="M1.500 2h8v8h-8z" fill="#fff"/><path d="M4 5h11v8H4z" fill="#aab6c4"/>', ord4: '<path d="M6 6h9v8H6z" fill="#aab6c4"/><path d="M1.500 2.500h10v7h-10z" fill="#fff"/>',
  abc: '<text x="0" y="6.500" font-size="6.500" font-weight="700" fill="#222" stroke="none">ABC</text><path d="M3 9v4h9M13 3v9"/><path d="M15 11v4h-4z" fill="#111"/>',
  ordh: '<path d="M1.500 2h11v8h-11z" fill="#aab6c4"/><path d="M6 12h9M6 14h9" stroke-dasharray="2 1"/>',
  textI: '<path d="M1.500 13.500L6 2.500l4 11M3.200 10h5.500" stroke-width="1.700" stroke="#222"/><path d="M13 2v12M11.500 2h3M11.500 14h3" stroke="#2f7db8"/>',
  textE: '<path d="M1.500 13.500L6 2.500l4 11M3.200 10h5.500" stroke-width="1.700" stroke="#222"/>' + pencil,
  find: '<circle cx="5.500" cy="6.500" r="4.500"/><path d="M9 10l5 5" stroke-width="1.800"/><text x="3" y="8.500" font-size="6" font-weight="700" fill="#222" stroke="none">ABC</text>',
  spell: '<text x="1" y="5.500" font-size="6.500" font-weight="700" fill="#222" stroke="none">ABC</text><path d="M4 10l3 4 6-7" stroke="#2a9a2a" stroke-width="2"/>',
  tscale: '<path d="M3 1.500h12v12H3z" fill="#8cccf0" stroke="#2f7db8"/><path d="M1 6h9v9H1z" fill="#fff"/><path d="M3 13.500l2.500-6 2.500 6"/>',
  tjust: '<path d="M2 4h9v10H2zM1 14h2M13 3v9M11.500 5L13 3l1.500 2" fill="#fff"/><path d="M4 12l2.500-6 2.500 6M5 10h3" stroke-width="1.300"/>',
  tspace: '<path d="M2 1.500h12v3H2z" fill="#e8b050" stroke="#8a5a18"/><path d="M5 6.500h7v3H5zM2 11.500h9v3H2zM13 9v5" fill="#fff"/>',
  order: '<path d="M1.500 3h9v6h-9z" fill="#aab6c4"/><path d="M5 7h9v5H5z" fill="#fff"/><path d="M8 14h6"/>',
  hatche: '<path d="M3.500 1v14M12.500 1v14M1 3.500h14M1 12.500h14M5 10l5-5M5 7l2-2"/>' + pencil,
  plinee: '<path d="M2 12h10M2 12c0-6 6-8 9-6l3 3"/>' + pencil, splinee: '<path d="M14 2C6 2 2 6 6 8s4 4-3 6"/>' + pencil,
  arre: '<path d="M1 4l4-1 2 3 6-3M3 8l4 6 5-8"/>' + pencil, refe: '<path d="M3 2h9v6H3zM1 9h5v4H1z"/><circle cx="11" cy="11" r="3"/>',
  refs: '<path d="M1 3l4 1 2 2 5-2M4 8l5 6 5-8-4-2z" stroke="#3a6a3a"/>', attsync: '<path d="M1.500 2.500h8v5h-8z" fill="#cfe6f6" stroke="#1f6ba8"/><path d="M9 2l5 3-5 3zM2 9.500h5.500v5H2zM9 9.500h5v5H9z" fill="#5aa4dc" stroke="#1f5f90"/>',
  vs2d: '<path d="M1.500 2h9v9h-9z" fill="#f4f4f4"/><circle cx="10" cy="9.500" r="4.500"/>', vswire: '<circle cx="8" cy="8" r="6.300" fill="#f6f6f6"/><path d="M3 5l5 7 5-7M3.500 11.500L8 6l4.500 5.500" stroke-width=".8"/>',
  vshide: '<circle cx="8" cy="8" r="6.300" fill="#f6f6f6"/><path d="M3 5l5 7 5-7"/>', vsreal: '<circle cx="8" cy="8" r="5.700" fill="#2c74cc" stroke="#1c4c90"/><circle cx="6.500" cy="5.500" r="2" fill="#6ca8ec" stroke="none"/>',
  vsconc: '<circle cx="8" cy="8" r="5.700" fill="#5a3c98" stroke="#3c2a60"/><circle cx="6.500" cy="6" r="3.500" fill="#f0a030" stroke="none"/><circle cx="6" cy="5" r="1.500" fill="#fce08c" stroke="none"/>',
  vsmgr: '<circle cx="7" cy="7" r="5.500"/><path d="M4 3l4 5"/><path d="M7 8.500h8v6H7zM7 10.500h8" fill="#dce8f4"/>',
  bino: '<path d="M2 14V7l2-4h2v11zM14 14V7l-2-4h-2v11zM6 7h4" fill="#eee" stroke="#222" stroke-width="1.200"/>',
  user: '<path d="M1 14c1-3 4-2 4.500-4C3 6 4 2 8 2s5 4 2.500 8c.5 2 3.500 1 4.500 4z" fill="#ddd" stroke="#222"/>',
  xchange: '<path d="M2 3h3l3 4 3-4h3l-3.500 5 3.500 5h-3L8 9l-3 4H2l3.500-5z" fill="#d4e2f8" stroke="#234a98" stroke-width="1.200"/>',
  a360: '<path d="M2 13l5-10 3 4z" fill="#ddd" stroke="#345"/><path d="M7 7h8v8H7z" fill="#e07828" stroke="#a04c10"/><path d="M11 8v4M9 11l2 2 2-2" stroke="#fff" stroke-width="1.300"/>',
  helpb: '<circle cx="8" cy="8" r="6.700" fill="#fff" stroke="#222"/><path d="M6 6.300c0-2.800 4.200-2.800 4.200-.3C10.200 8 8 7.500 8 9.500M8 11v1.500" stroke="#1c50a0" stroke-width="1.900"/>',
  lock: '<path d="M3.500 7h9v7h-9z" fill="#f0dca8"/><path d="M5.500 7V4.500a2.500 2.500 0 0 1 5 0V7" stroke-width="1.500"/>',
  anno: '<path d="M8 1.500l2 7 4.500 4v1.500l-5-2-1.500-1-1.500 1-5 2v-1.500l4.500-4z" fill="#fafafa"/>',
  sheetok: '<path d="M2 3h9l3 3v8H2z" fill="#88b8d8"/><path d="M2 3h6v4H2z" fill="#f0e8a0"/><path d="M6 11l3 3 6-6" stroke="#3a9a20" stroke-width="2"/>',
  bulb: '<path d="M6 11c0-3-3-3-3-6a5 5 0 0 1 10 0c0 3-3 3-3 6z" fill="#f8eca0"/><path d="M6.500 13h3" stroke-width="2"/>',
  gridg: '<path d="M0 3h16v10H0z" fill="#9dbf9d" stroke="none"/><path d="M5.500 2v12M10.500 2v12M2 5.500h12M2 10.500h12" stroke="#111" stroke-width="1.800"/>',
  pf1: '<path d="M2 7h10v7H2z" fill="#1c9a3c" stroke="#0c4c1c"/><path d="M2 7l5-4h6v6l-3 2z" fill="#6a3c2c"/><path d="M8 3h6v6" stroke="#223a78" stroke-width="1.600"/>',
  pf2: '<path d="M5 4c0-2 9-2 9 0v9c0 2-9 2-9 0z" fill="#e8d020" stroke="#8a7a08"/><ellipse cx="9.500" cy="4" rx="4.500" ry="1.700" fill="#fff050" stroke="#8a7a08"/><path d="M2 6h6v5H2z" fill="#30b050"/><path d="M3 10l4-3v3" stroke="#111"/>',
  pf3: '<path d="M2 2h7v7H2z" fill="#e8ecf4"/><path d="M7 8h8v6H7z" fill="#4fc46a" stroke="#157a35"/><path d="M4 9v4h4M6 11.500l2 1.500-2 1.500" stroke="#1c3aa0" stroke-width="1.300"/>',
  pf4: '<path d="M2 6h10v5l-2 3H2z" fill="#4fc46a" stroke="#157a35"/><path d="M7 2h7v5M4 4h6M12 3L8 8" stroke="#223a78" stroke-width="1.300"/>',
  pf5: '<path d="M2 2h12v9l-3 3H2z" fill="#5fcc78" stroke="#157a35" stroke-width="1.200"/><path d="M4 5h8M6 7v5M9 7v5" stroke="#a06010" stroke-width="1.200"/>',
  pf6: '<path d="M1 8h8" stroke="#2c8c3c" stroke-width="2"/><path d="M1 11.500h8" stroke="#7c2888" stroke-width="3"/><path d="M9 9l5-6" stroke="#d0a820" stroke-width="1.500"/><path d="M9 10l5 5" stroke="#c02020" stroke-width="1.500"/>',
  pf7: '<path d="M6 2h8v6H6z" fill="#e8ecf4" stroke="#223"/><path d="M8 4h4v2H8z" stroke="#223a78"/><path d="M7 8l-4 4" stroke="#223"/><path d="M2 11h6v4H1z" fill="#4fc46a" stroke="#157a35"/>',
  pf8: '<path d="M2 3l3-1h9l-2 2H8l-1 11H2z" fill="#9aa4b0"/><path d="M8 5h6v5l-2 1H8z" fill="#4fc46a" stroke="#157a35"/><path d="M4 4v11M2 7h4M2 10h4" stroke="#556"/><path d="M8 12h4" stroke="#38b0c8" stroke-width="2"/>',
  infer: '<path d="M8 1v9M3 6h9" stroke-width="1.800" stroke="#234"/><path d="M9 9h5v5H9z" stroke="#456"/><circle cx="8" cy="6" r="2" fill="#456"/>',
  snap: '<path d="M2 4h9M2 7h9M2 10h9" stroke-dasharray="1 2" stroke-width="1.500"/><path d="M13 3v8" stroke-width="2"/>',
  grid: '<path d="M2 2h12v12H2zM5 2v12M8 2v12M11 2v12M2 5h12M2 8h12M2 11h12" fill="#eee" stroke="#222"/>',
  ortho: '<path d="M3 2v11h11" stroke-width="1.500" stroke="#555"/><path d="M3 9h4v4" stroke="#777"/>', polar: '<circle cx="7" cy="9" r="4.500" stroke="#222" stroke-width="1.500"/><path d="M7 9l6-7M7 9h7" stroke="#222" stroke-width="1.500"/>',
  osnap: '<path d="M3.500 4h10v10h-10z" fill="#fff"/>' + ring(3, 3), osnap3d: '<path d="M5 3h9v8l-2 2H4V5z" fill="#eef"/>' + ring(4, 13),
  otrack: '<path d="M13 2L4 12h11" stroke="#234" stroke-width="1.600"/>', ducs: '<path d="M3 2v11h12M3 13l9-8"/><path d="M9 3h4v4H9z" fill="#f0a030" stroke="none"/>',
  dyn: '<path d="M6 2v9M2 7h8M9 9h5v3H9z" stroke="#111" stroke-width="1.600"/>', lwt: '<path d="M3 8h10M8 3v10" stroke="#111" stroke-width="1.800"/>',
  tpy: '<path d="M2 2h12v12H2z" fill="#b8d4f0" stroke="#4a88c8"/><path d="M2 5h12M2 8h12M2 11h12M5 2v12M8 2v12M11 2v12" stroke="#fff" stroke-dasharray="1 1"/>',
  qp: '<path d="M5 3h7v10H5zM7 6h3M8.500 6v5" stroke="#111"/>', sc: '<path d="M2 4h6M5 1v6"/><path d="M6 5h6v5H6z" fill="#ddd"/><path d="M9 9h6v5H9z" fill="#6a4"/>',
  plus3d: '<path d="M6 2h4v4h4v4h-4v4H6v-4H2V6h4z" fill="#fff"/>', zpin: '<path d="M2 6h6l-6 7h7" stroke="#222" stroke-width="1.500"/><circle cx="11.500" cy="5" r="3.500" fill="#2f7fc0" stroke="none"/><path d="M11.500 8v6" stroke="#ddd" stroke-width="1.500"/>',
  zfx: '<text x="3" y="8" font-size="8.500" font-weight="700" fill="#111" stroke="none">Z=</text><text x="0" y="15" font-size="7" font-weight="700" fill="#111" stroke="none" textLength="15">f(11)</text>',
  lmodel: '<path d="M3 2h10v8H3zM1 13h14" fill="#fafafa" stroke-width="1.500"/><path d="M5 4v4h4"/>', lquick: '<path d="M1.500 3h6v7h-6zM8.500 3h6v7h-6z" fill="#fafafa"/><path d="M1 13h14" stroke-width="2"/>',
  blank: '', gear: '<circle cx="8" cy="8" r="5" fill="#eee" stroke-width="1.400"/><circle cx="8" cy="8" r="6.500" stroke-dasharray="2 2" stroke-width="1.800"/><circle cx="8" cy="8" r="2"/>',
  unlock: '<path d="M2 8h8v6H2z" fill="#eee"/><path d="M8.500 8V5a2.500 2.500 0 0 1 5 0v2" stroke-width="1.500"/>',
  orange: '<circle cx="8" cy="8" r="5.500" fill="#e87828" stroke="#b85810"/><path d="M5 5l2 3 3-3" stroke="#fce0b8"/>', clean: '<path d="M1.500 2.500h13v11h-13z" fill="#eee"/><path d="M1.500 4h13" stroke-width="2.500"/>'
};
icons.saveg = icons.save; icons.printw = icons.print; icons.previeww = icons.preview;
icons.undog = icons.undo.replace('fill="#f2f2f2"', 'fill="#999" stroke="#c4c4c4"');
icons.redog = icons.redo.replace('stroke="#b8b8b8"', 'fill="#999" stroke="#c4c4c4"');
icons.anno2 = icons.anno + '<circle cx="12.500" cy="10" r="2.500" fill="#f4c048" stroke="#b88420"/>';
icons.anno3 = icons.anno + '<path d="M1 1l4 4M5 1L1 5M3 0v6" stroke="#e89020"/>';

const draw = (name, cls) => `<svg class="${cls}" viewBox="0 0 16 16" fill="none" stroke="#414b56" stroke-width="1">${icons[name] || ''}</svg>`;
const caret = c => `<svg class="h-[4px] w-[10px] shrink-0" viewBox="0 0 10 4"><path d="M2 0h6.500L5.200 4z" fill="${c}"/></svg>`;
document.querySelectorAll('[data-icons]').forEach(el => {
  const col = el.classList.contains('flex-col');
  const header = el.closest('header'), section = el.closest('section');
  el.innerHTML = el.dataset.icons.split(' ').map(t => {
    if (t === '|') return '<i class="flex w-[4.6px] shrink-0 justify-center"><i class="h-[15px] w-px bg-[#444]"></i></i>';
    if (t === '-') return '<i class="h-px w-[15px] bg-[#aaa] shrink-0"></i>';
    if (t === ';') return '<i class="h-[14px] w-px bg-[#999] shrink-0"></i>';
    if (t === 'caret' || t === 'caret2') return caret('#111');
    if (t === 'caretg') return caret(header ? '#444' : '#999');
    return draw(t, col ? 'size-[15px] shrink-0' : header ? 'h-[14px] w-[17px] shrink-0' : section ? 'size-[15px] shrink-0 mx-px' : 'h-[15px] w-[18.4px] shrink-0');
  }).join('');
});
document.querySelectorAll('[data-status]').forEach(el => {
  el.innerHTML = el.dataset.status.split(' ').map(t => {
    const on = t.endsWith('*');
    return `<div class="${on ? 'flex h-full grow basis-0 items-center justify-center border-r border-[#777] bg-[#b5dde8]' : 'flex h-full grow basis-0 items-center justify-center border-r border-[#777]'}">${draw(t.replace('*', ''), 'size-[14px]')}</div>`;
  }).join('');
});
document.querySelectorAll('[data-grip]').forEach(el => {
  el.innerHTML = '<div class="flex h-[18px] w-full items-center justify-center gap-px bg-[#4f4f4f]"><i class="h-[13px] w-px bg-[#8a8a8a]"></i><i class="h-[13px] w-px bg-[#8a8a8a]"></i></div>';
});
document.querySelectorAll('[data-bars]').forEach(el => {
  el.innerHTML = '<div class="flex h-[18px] items-center justify-center gap-[2px] bg-[#e4e4e4]"><i class="h-[15px] w-px bg-[#333]"></i><i class="h-[15px] w-px bg-[#333]"></i></div>';
});
document.querySelectorAll('[data-combo]').forEach(el => {
  el.insertAdjacentHTML('beforeend', '<svg class="ml-auto h-[4px] w-[7px] shrink-0" viewBox="0 0 7 4"><path d="M0 0h7L3.500 4z"/></svg>');
});
// Condense each label to the width of its slot
document.querySelectorAll('[data-w]').forEach(el => {
  const w = el.dataset.w, label = el.innerHTML;
  el.innerHTML = `<svg class="block shrink-0 overflow-visible" width="${w}" height="12"><text x="0" y="9.700" fill="currentColor" textLength="${w}" lengthAdjust="spacingAndGlyphs">${label}</text></svg>`;
});
</script>
</body>
</html>
